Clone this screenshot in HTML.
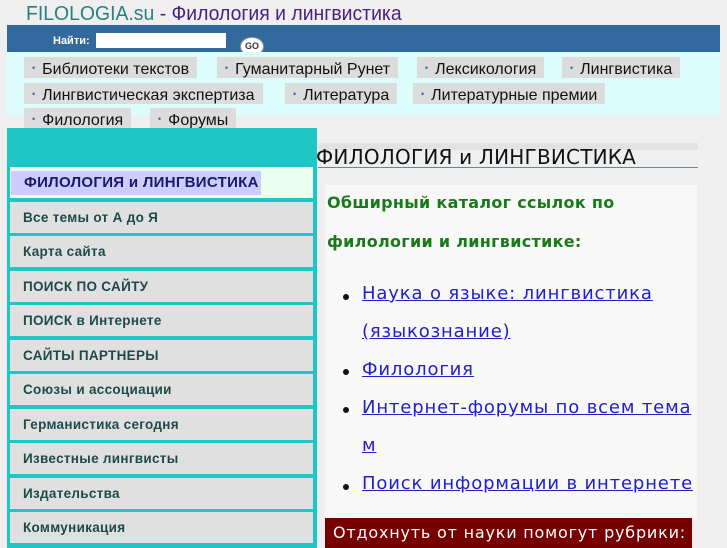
<!DOCTYPE html>
<html><head><meta charset="utf-8"><style>
body{margin:0;width:727px;height:545px;overflow:hidden;background:#efefef;font-family:"Liberation Sans",sans-serif;position:relative}
.t{position:absolute;left:26px;top:3px;font-size:20px;transform:scaleX(.97);transform-origin:left;white-space:nowrap}
.bar{position:absolute;left:7px;top:25px;width:713px;height:27px;background:#336a9e}
.bar b{position:absolute;left:46px;top:10px;color:#fff;font-size:11px}
.bar input{position:absolute;left:89px;top:8px;width:130px;height:15px;border:0;background:#fff;padding:0}
.go{position:absolute;left:233px;top:12px;width:22px;height:17px;border-radius:50%;background:#fff;border:1px solid #999;font-size:9px;text-align:center;line-height:17px;font-weight:bold;color:#334}
.cy{position:absolute;left:7px;top:52px;width:713px;height:63px;background:#ddfdfd}
.tag{position:absolute;height:21px;background:#dcdcdc;font-size:16px;line-height:23px;padding:0 8px;white-space:nowrap;color:#111}
.tag s{text-decoration:none;color:#36a;font-size:9px;vertical-align:3px;margin-right:7px}
.side{position:absolute;left:7px;top:128px;width:310px;height:420px;background:#1ec6c6}
.it{position:absolute;left:3px;width:303px;height:31px;background:#e0e0e0;font-weight:bold;font-size:13.5px;line-height:31px;color:#1d4a4a;padding-left:13px;box-sizing:border-box;letter-spacing:.3px}
.h{position:absolute;left:316px;top:145px;font-family:"DejaVu Sans",sans-serif;font-size:20px;color:#111;letter-spacing:.2px}
.box{position:absolute;left:325px;top:185px;width:372px;height:335px;background:#f8f8f8}
.g{position:absolute;left:327px;font-family:"DejaVu Sans",sans-serif;font-weight:bold;font-size:16px;color:#1a7a1a;letter-spacing:.3px}
.l{position:absolute;left:362px;font-family:"DejaVu Sans",sans-serif;font-size:18px;color:#2020c8;text-decoration:underline;white-space:nowrap;letter-spacing:.85px}
.d{position:absolute;left:343px;width:6px;height:6px;border-radius:50%;background:#111}
.red{position:absolute;left:325px;top:518px;width:367px;height:30px;background:#770000;color:#fff;font-family:"DejaVu Sans",sans-serif;font-size:16px;line-height:30px;padding-left:8px;box-sizing:border-box;letter-spacing:.8px;white-space:nowrap;overflow:hidden}
</style></head><body>
<div class="t"><span style="color:#2a7f7f">FILOLOGIA.su</span> <span style="color:#4a2080">- Филология и лингвистика</span></div>
<div class="bar"><b>Найти:</b><input><div class="go">GO</div></div>
<div class="cy"></div>
<div class="tag" style="left:24px;top:57px"><s>•</s>Библиотеки текстов</div>
<div class="tag" style="left:217px;top:57px"><s>•</s>Гуманитарный Рунет</div>
<div class="tag" style="left:417px;top:57px"><s>•</s>Лексикология</div>
<div class="tag" style="left:562px;top:57px"><s>•</s>Лингвистика</div>
<div class="tag" style="left:24px;top:83px"><s>•</s>Лингвистическая экспертиза</div>
<div class="tag" style="left:285px;top:83px"><s>•</s>Литература</div>
<div class="tag" style="left:413px;top:83px"><s>•</s>Литературные премии</div>
<div class="tag" style="left:24px;top:108px"><s>•</s>Филология</div>
<div class="tag" style="left:150px;top:108px"><s>•</s>Форумы</div>
<div class="side">
<div class="it" style="top:39px;background:#e8fff0;padding-left:0"><span style="display:inline-block;background:#ccccff;color:#1a1a66;padding:0 2px 0 13px;line-height:24px;margin-left:1px;font-size:15px;letter-spacing:.3px">ФИЛОЛОГИЯ и ЛИНГВИСТИКА</span></div>
<div class="it" style="top:74px">Все темы от А до Я</div>
<div class="it" style="top:108px">Карта сайта</div>
<div class="it" style="top:143px">ПОИСК ПО САЙТУ</div>
<div class="it" style="top:177px">ПОИСК в Интернете</div>
<div class="it" style="top:212px">САЙТЫ ПАРТНЕРЫ</div>
<div class="it" style="top:246px">Союзы и ассоциации</div>
<div class="it" style="top:281px">Германистика сегодня</div>
<div class="it" style="top:315px">Известные лингвисты</div>
<div class="it" style="top:350px">Издательства</div>
<div class="it" style="top:384px">Коммуникация</div>
</div>
<div style="position:absolute;left:318px;top:143px;width:380px;height:7px;background:#e2e2e2"></div>
<div class="h">ФИЛОЛОГИЯ и ЛИНГВИСТИКА</div>
<div style="position:absolute;left:318px;top:167px;width:380px;height:1px;background:#5a8ab0"></div>
<div class="box"></div>
<div class="g" style="top:193px">Обширный каталог ссылок по</div>
<div class="g" style="top:232px">филологии и лингвистике:</div>
<div class="d" style="top:294px"></div><div class="l" style="top:283px">Наука о языке: лингвистика</div>
<div class="l" style="top:321px">(языкознание)</div>
<div class="d" style="top:369px"></div><div class="l" style="top:359px">Филология</div>
<div class="d" style="top:407px"></div><div class="l" style="top:397px">Интернет-форумы по всем тема</div>
<div class="l" style="top:435px">м</div>
<div class="d" style="top:484px"></div><div class="l" style="top:473px">Поиск информации в интернете</div>
<div class="red">Отдохнуть от науки помогут рубрики:</div>
</body></html>
